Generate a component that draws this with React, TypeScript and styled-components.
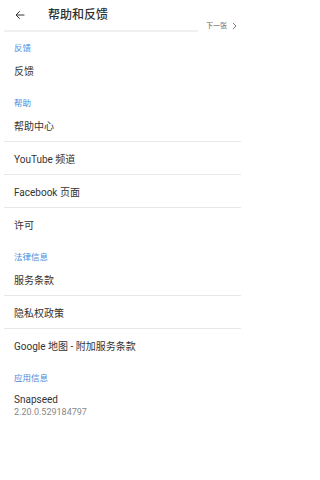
import styled, { createGlobalStyle } from "styled-components";

const SECTIONS = [
  { title: "反馈", items: ["反馈"] },
  { title: "帮助", items: ["帮助中心", "YouTube 频道", "Facebook 页面", "许可"] },
  { title: "法律信息", items: ["服务条款", "隐私权政策", "Google 地图 - 附加服务条款"] },
];

const GlobalStyle = createGlobalStyle`
  html, body {
    margin: 0;
    padding: 0;
    background: #ffffff;
  }
  body {
    font-family: Roboto, "Noto Sans CJK SC", sans-serif;
    color: #333333;
  }
`;

export default function App() {
  return (
    <>
      <GlobalStyle />
      <Page>
        <TopRow>
          <TitleBar>
            <BackButton>
              <svg width="12" height="12" viewBox="0 0 24 24" fill="none">
                <path
                  d="M20 12H5M11 5l-7 7 7 7"
                  stroke="#333"
                  strokeWidth="2"
                  strokeLinecap="round"
                  strokeLinejoin="round"
                />
              </svg>
            </BackButton>
            <Title>帮助和反馈</Title>
          </TitleBar>
          <NextLink>
            下一张
            <svg width="5" height="8" viewBox="0 0 5 8" fill="none">
              <path d="M1 1l3 3-3 3" stroke="#666" strokeWidth="0.9" />
            </svg>
          </NextLink>
        </TopRow>

        {SECTIONS.map((section) => (
          <Section key={section.title}>
            <SectionTitle>{section.title}</SectionTitle>
            {section.items.map((item, i) => (
              <Item key={item} last={i === section.items.length - 1}>
                {item}
              </Item>
            ))}
          </Section>
        ))}

        <Section>
          <SectionTitle>应用信息</SectionTitle>
          <AppInfo>
            <AppName>Snapseed</AppName>
            <Version>2.20.0.529184797</Version>
          </AppInfo>
        </Section>
      </Page>
    </>
  );
}

const Page = styled.div`
  width: 241px;
  min-height: 480px;
  display: flex;
  flex-direction: column;
`;

const TopRow = styled.div`
  display: flex;
  align-items: flex-start;
`;

const TitleBar = styled.div`
  width: 194px;
  height: 32px;
  margin-left: 4px;
  box-sizing: border-box;
  border-bottom: 2px solid #f0f0f0;
  display: flex;
  align-items: center;
  padding-bottom: 1px;
`;

const BackButton = styled.div`
  width: 12px;
  height: 12px;
  margin-left: 10px;
  display: flex;
`;

const Title = styled.div`
  margin-left: 22px;
  font-size: 12px;
  line-height: 14px;
  font-weight: 500;
  color: #303030;
`;

const NextLink = styled.div`
  margin-left: 8px;
  margin-top: 21px;
  display: flex;
  align-items: center;
  gap: 5px;
  font-size: 7px;
  line-height: 10px;
  color: #666666;
  white-space: nowrap;
`;

const Section = styled.div`
  display: flex;
  flex-direction: column;
`;

const SectionTitle = styled.div`
  padding: 10px 0 0 14px;
  font-size: 8.5px;
  line-height: 12px;
  color: #4a88dc;
`;

const Item = styled.div<{ last: boolean }>`
  height: 33px;
  margin-left: 4px;
  padding-left: 10px;
  box-sizing: border-box;
  display: flex;
  align-items: center;
  font-size: 10px;
  color: #333333;
  border-bottom: 1px solid ${({ last }) => (last ? "transparent" : "#e8e8e8")};
`;

const AppInfo = styled.div`
  padding: 9px 0 0 14px;
  display: flex;
  flex-direction: column;
`;

const AppName = styled.div`
  font-size: 10px;
  line-height: 13px;
  color: #333333;
`;

const Version = styled.div`
  font-size: 9px;
  line-height: 12px;
  color: #888888;
`;
